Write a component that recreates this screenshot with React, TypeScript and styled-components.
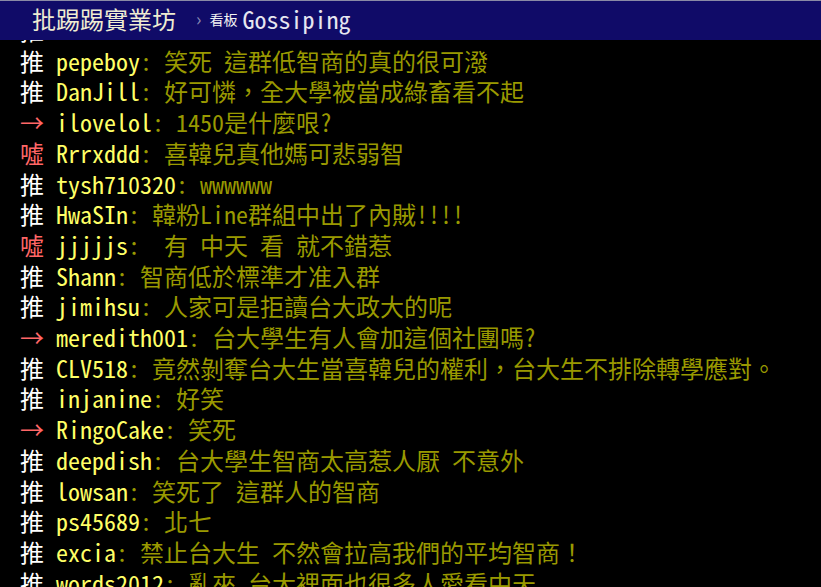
import React from 'react';
import styled, { createGlobalStyle } from 'styled-components';

type Tag = '推' | '噓' | '→';

interface pushProps {
  tag: Tag;
  userid: string;
  content: string;
}

const pushes: pushProps[] = [
  { tag: '推', userid: 'moonet', content: 'an' },
  { tag: '推', userid: 'pepeboy', content: '笑死 這群低智商的真的很可潑' },
  { tag: '推', userid: 'DanJill', content: '好可憐，全大學被當成綠畜看不起' },
  { tag: '→', userid: 'ilovelol', content: '1450是什麼哏?' },
  { tag: '噓', userid: 'Rrrxddd', content: '喜韓兒真他媽可悲弱智' },
  { tag: '推', userid: 'tysh710320', content: 'wwwwww' },
  { tag: '推', userid: 'HwaSIn', content: '韓粉Line群組中出了內賊!!!!' },
  { tag: '噓', userid: 'jjjjjs', content: ' 有 中天 看 就不錯惹' },
  { tag: '推', userid: 'Shann', content: '智商低於標準才准入群' },
  { tag: '推', userid: 'jimihsu', content: '人家可是拒讀台大政大的呢' },
  { tag: '→', userid: 'meredith001', content: '台大學生有人會加這個社團嗎?' },
  { tag: '推', userid: 'CLV518', content: '竟然剝奪台大生當喜韓兒的權利，台大生不排除轉學應對。' },
  { tag: '推', userid: 'injanine', content: '好笑' },
  { tag: '→', userid: 'RingoCake', content: '笑死' },
  { tag: '推', userid: 'deepdish', content: '台大學生智商太高惹人厭 不意外' },
  { tag: '推', userid: 'lowsan', content: '笑死了 這群人的智商' },
  { tag: '推', userid: 'ps45689', content: '北七' },
  { tag: '推', userid: 'excia', content: '禁止台大生 不然會拉高我們的平均智商！' },
  { tag: '推', userid: 'words2012', content: '亂來 台大裡面也很多人愛看中天' },
];

const App = () => {
  return (
    <>
      <GlobalStyle />
      <Page>
        <TopBar>
          <Logo>批踢踢實業坊</Logo>
          <Crumb>›</Crumb>
          <BoardLabel>看板</BoardLabel>
          <BoardName>Gossiping</BoardName>
        </TopBar>
        <Screen>
          <PushList>
            {pushes.map((push, i) => (
              <PushRow key={`push_${i}`}>
                <PushTag $tag={push.tag}>{push.tag} </PushTag>
                <PushUser>{push.userid}</PushUser>
                <PushContent>: {push.content}</PushContent>
              </PushRow>
            ))}
          </PushList>
        </Screen>
      </Page>
    </>
  );
};

const GlobalStyle = createGlobalStyle`
  html, body {
    margin: 0;
    padding: 0;
    background: #000;
  }
  body {
    font-family: "Noto Sans Mono CJK TC", "Noto Sans CJK TC", monospace;
  }
`;

const Page = styled.div`
  width: 821px;
  height: 587px;
  overflow: hidden;
  display: flex;
  flex-direction: column;
  background: #000;
`;

const TopBar = styled.div`
  height: 36px;
  padding: 0 0 3px 32px;
  border-top: 1px solid #8a8aa6;
  background-color: #100b68;
  display: flex;
  align-items: center;
  flex-shrink: 0;
  line-height: 1.2;
`;

const Logo = styled.span`
  font-size: 24px;
  color: #efecd2;
`;

const Crumb = styled.span`
  font-size: 18px;
  color: #8c8cb4;
  margin-left: 20px;
  margin-right: 8px;
`;

const BoardLabel = styled.span`
  font-size: 14px;
  color: #f2f2f2;
  margin-right: 5px;
`;

const BoardName = styled.span`
  font-size: 24px;
  color: #e6e6f0;
`;

const Screen = styled.div`
  flex: 1;
  overflow: hidden;
`;

const PushList = styled.div`
  margin-top: -25px;
  padding-left: 20px;
`;

const PushRow = styled.div`
  font-size: 24px;
  line-height: 30.7px;
  white-space: pre;
`;

const PushTag = styled.span<{ $tag: Tag }>`
  color: ${(p) => (p.$tag === '推' ? '#fff' : '#f66')};
`;

const PushUser = styled.span`
  color: #ff6;
`;

const PushContent = styled.span`
  color: #990;
`;

export default App;
